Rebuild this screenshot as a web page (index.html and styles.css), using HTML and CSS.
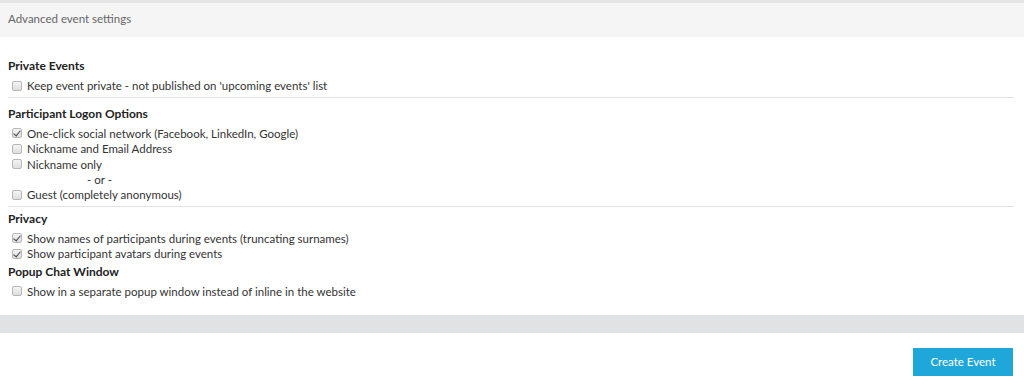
FILE: index.html
```html
<!DOCTYPE html>
<html lang="en-us">
  <head>
    <meta charset="utf-8">
    <title>Advanced event settings</title>
    <link rel="stylesheet" href="styles.css">
  </head>
  <body>
    <div class="panel">
      <div class="panel-head">Advanced event settings</div>
      <div class="panel-body">
        <div class="group">
          <div class="group-title">Private Events</div>
          <label class="opt"><span class="box"></span>Keep event private - not published on 'upcoming events' list</label>
        </div>
        <div class="group short">
          <div class="group-title">Participant Logon Options</div>
          <label class="opt"><span class="box checked"></span>One-click social network (Facebook, LinkedIn, Google)</label>
          <label class="opt"><span class="box"></span>Nickname and Email Address</label>
          <label class="opt"><span class="box"></span>Nickname only</label>
          <div class="or">- or -</div>
          <label class="opt"><span class="box"></span>Guest (completely anonymous)</label>
        </div>
        <div class="group plain">
          <div class="group-title">Privacy</div>
          <label class="opt"><span class="box checked"></span>Show names of participants during events (truncating surnames)</label>
          <label class="opt"><span class="box checked"></span>Show participant avatars during events</label>
        </div>
        <div class="group plain">
          <div class="group-title">Popup Chat Window</div>
          <label class="opt"><span class="box"></span>Show in a separate popup window instead of inline in the website</label>
        </div>
      </div>
      <div class="panel-foot"></div>
    </div>
    <div class="actions">
      <div class="button">Create Event</div>
    </div>
  </body>
</html>
```

FILE: styles.css
```css
* {
    margin: 0;
    padding: 0;
    box-sizing: border-box;
}
body {
    background: #fff;
    font-family: Lato, "Liberation Sans", sans-serif;
    font-size: 11.5px;
    color: #333;
}
.panel {
    border-top: 3px solid #e4e4e4;
}
.panel-head {
    height: 34px;
    line-height: 32px;
    padding: 0 8px;
    background: #f5f5f5;
    color: #666;
}
.panel-body {
    padding: 21px 10px 14px 8px;
}
.group {
    border-bottom: 1px solid #e2e2e2;
    padding-bottom: 3px;
    margin-bottom: 8px;
}
.group.short {
    margin-bottom: 4px;
}
.group.plain {
    border-bottom: none;
    margin-bottom: 0;
    padding-bottom: 2px;
}
.group-title {
    font-weight: bold;
    font-size: 12px;
    color: #222;
    line-height: 16px;
    margin-bottom: 4px;
}
.opt {
    display: flex;
    align-items: center;
    height: 15.5px;
    color: #333;
}
.box {
    width: 10px;
    height: 10px;
    margin: 0 5px 0 4px;
    border: 1px solid #b8b8b8;
    border-radius: 2px;
    background: linear-gradient(to bottom, #f4f4f4 0%, #dedede 100%);
    position: relative;
}
.box.checked::after {
    content: "";
    position: absolute;
    left: 2px;
    top: 0;
    width: 3px;
    height: 6px;
    border: solid #444;
    border-width: 0 1.5px 1.5px 0;
    transform: rotate(40deg);
}
.or {
    height: 15px;
    line-height: 15px;
    padding-left: 79px;
}
.panel-foot {
    height: 18px;
    background: #e1e2e3;
}
.actions {
    display: flex;
    justify-content: flex-end;
    padding: 15px 11px 0 0;
}
.button {
    width: 100px;
    height: 28px;
    line-height: 28px;
    text-align: center;
    background: #1fa7da;
    color: #fff;
}
```
